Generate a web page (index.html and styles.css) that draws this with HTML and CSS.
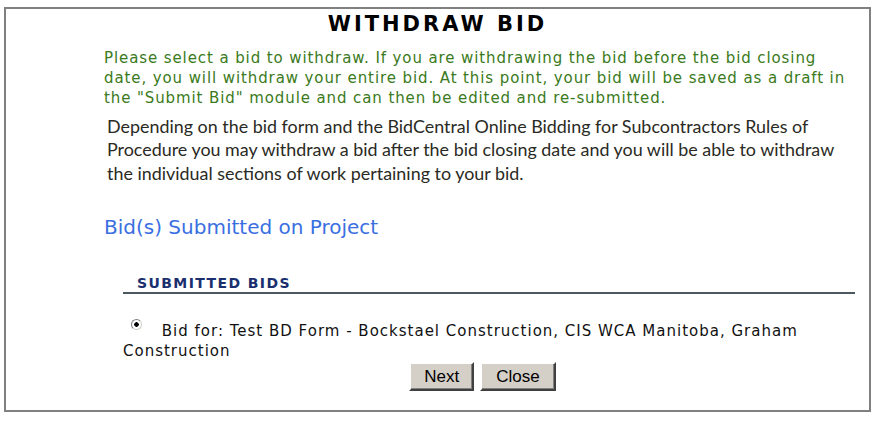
FILE: index.html
```html
<!DOCTYPE html>
<html lang="en">

<head>
    <meta charset="UTF-8">
    <title>Withdraw Bid</title>
    <link rel="stylesheet" href="styles.css">
</head>

<body>
    <div class="frame">
        <h1 class="title">WITHDRAW BID</h1>

        <p class="intro">Please select a bid to withdraw. If you are withdrawing the bid before the bid closing
            date, you will withdraw your entire bid. At this point, your bid will be saved as a draft in
            the "Submit Bid" module and can then be edited and re-submitted.</p>

        <p class="note">Depending on the bid form and the BidCentral Online Bidding for Subcontractors Rules of
            Procedure you may withdraw a bid after the bid closing date and you will be able to withdraw
            the individual sections of work pertaining to your bid.</p>

        <h2 class="section-title">Bid(s) Submitted on Project</h2>

        <div class="bids">
            <div class="bids-header">SUBMITTED BIDS</div>
            <label class="bid-row"><input type="radio" name="bid" checked> Bid for: Test BD Form - Bockstael Construction, CIS WCA Manitoba, Graham Construction</label>
            <div class="actions">
                <button type="button" class="btn-next">Next</button>
                <button type="button">Close</button>
            </div>
        </div>
    </div>
</body>

</html>
```

FILE: styles.css
```css
body {
    margin: 0;
    background-color: #fff;
    font-family: "DejaVu Sans", Verdana, sans-serif;
}

.frame {
    margin: 7px 0 0 4px;
    width: 863px;
    height: 401px;
    border: 2px solid #808080;
}

.title {
    margin: 2px 0 0;
    font-size: 21px;
    line-height: 26px;
    letter-spacing: 3px;
    text-align: center;
    color: #000;
}

.intro {
    margin: 11px 0 0 98px;
    width: 750px;
    font-size: 15px;
    line-height: 20px;
    letter-spacing: 0.9px;
    color: #3a7a20;
}

.note {
    margin: 7px 0 0 101px;
    width: 745px;
    font-family: Lato, "Open Sans", sans-serif;
    font-size: 17.9px;
    line-height: 23.4px;
    color: #2a2a24;
}

.section-title {
    margin: 30px 0 0 98px;
    font-size: 20px;
    line-height: 24px;
    font-weight: normal;
    color: #3a6fe2;
}

.bids {
    margin: 35px 0 0 117px;
    width: 732px;
}

.bids-header {
    padding-left: 14px;
    font-size: 14px;
    line-height: 18px;
    letter-spacing: 1.4px;
    font-weight: bold;
    color: #1b2f6e;
    border-bottom: 2px solid #4b595e;
}

.bid-row {
    display: block;
    margin-top: 27px;
    font-size: 15px;
    line-height: 20px;
    letter-spacing: 1px;
    color: #111;
}

.bid-row input {
    appearance: none;
    display: inline-block;
    vertical-align: top;
    margin: -2px 14px 0 8px;
    width: 11px;
    height: 11px;
    border: 1px solid #808080;
    border-right-color: #d4d0c8;
    border-bottom-color: #d4d0c8;
    border-radius: 50%;
    background: radial-gradient(circle, #000 0 2px, #fff 2.5px);
}

.actions {
    display: flex;
    justify-content: center;
    gap: 6px;
    margin-top: 1px;
    padding-right: 13px;
}

button {
    height: 29px;
    padding: 0 14px;
    font-family: "Liberation Sans", Arial, sans-serif;
    font-size: 17px;
    background-color: #d4d0c8;
    color: #000;
    border: 2px solid;
    border-color: #fff #404040 #404040 #fff;
    box-shadow: inset -1px -1px 0 #808080;
}

.btn-next {
    padding: 0 13px;
}
```
